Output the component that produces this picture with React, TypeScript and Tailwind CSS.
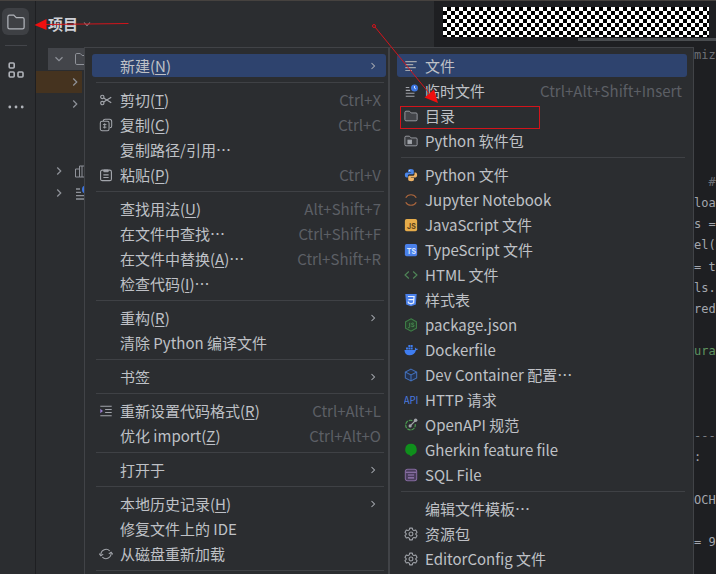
import React from "react";

type IconProps = { className?: string };

const Svg = ({ className = "w-[14px] h-[14px]", children }: { className?: string; children: React.ReactNode }) => (
  <svg className={`${className} flex-shrink-0`} viewBox="0 0 16 16" fill="none" stroke="currentColor" aria-hidden="true">
    {children}
  </svg>
);

const FolderIcon = ({ className }: IconProps) => (
  <Svg className={className}>
    <path d="M1.5 3.8c0-.8.5-1.3 1.3-1.3h3.4l2 2h5c.8 0 1.3.5 1.3 1.3v6.4c0 .8-.5 1.3-1.3 1.3H2.8c-.8 0-1.3-.5-1.3-1.3z" />
  </Svg>
);

const DirectoryIcon = () => (
  <Svg>
    <path
      d="M1 3.8c0-.8.5-1.3 1.3-1.3h3.9l2 2h5.5c.8 0 1.3.5 1.3 1.3v6.4c0 .8-.5 1.3-1.3 1.3H2.3c-.8 0-1.3-.5-1.3-1.3z"
      fill="#43454a"
    />
  </Svg>
);

const PackageIcon = () => (
  <Svg>
    <path d="M1 3.8c0-.8.5-1.3 1.3-1.3h3.9l2 2h5.5c.8 0 1.3.5 1.3 1.3v6.4c0 .8-.5 1.3-1.3 1.3H2.3c-.8 0-1.3-.5-1.3-1.3z" fill="#3a3c40" />
    <rect x="4.5" y="7" width="4" height="4" fill="currentColor" />
  </Svg>
);

const ChevronRight = ({ className = "w-3 h-3" }: IconProps) => (
  <Svg className={className}>
    <path d="M6 4 10 8 6 12" strokeWidth="1.4" />
  </Svg>
);

const ChevronDown = ({ className = "w-3 h-3" }: IconProps) => (
  <Svg className={className}>
    <path d="M4 6 8 10 12 6" strokeWidth="1.4" />
  </Svg>
);

const StructureIcon = () => (
  <Svg className="w-4 h-4">
    <g strokeWidth="1.6">
      <rect x="1.2" y="1" width="5" height="5" rx="1" />
      <rect x="1.2" y="10" width="5" height="5" rx="1" />
      <rect x="10" y="10" width="5" height="5" rx="1" />
    </g>
  </Svg>
);

const MoreIcon = () => (
  <Svg className="w-4 h-4">
    <g fill="currentColor" stroke="none">
      <circle cx="1.8" cy="8" r="1.4" />
      <circle cx="8" cy="8" r="1.4" />
      <circle cx="14.2" cy="8" r="1.4" />
    </g>
  </Svg>
);

const LibraryIcon = () => (
  <Svg className="w-4 h-4">
    <path d="M1.5 6h4v8h-4zM5.5 3h5v11h-5zM10.5 6h4v8h-4zM8 3v11" />
  </Svg>
);

const ScratchIcon = ({ className }: IconProps) => (
  <Svg className={className}>
    <path d="M2 4h4M2 7.3h5M2 10.6h10M2 14h10" strokeWidth="1.3" />
    <circle cx="12" cy="4.5" r="4" fill="#3d75e0" stroke="none" />
    <path d="M12 2.3v2.4l1.5.8" stroke="#fff" strokeWidth=".9" />
  </Svg>
);

const CutIcon = () => (
  <Svg>
    <circle cx="3.8" cy="4.5" r="1.9" strokeWidth="1.3" />
    <circle cx="3.8" cy="11.5" r="1.9" strokeWidth="1.3" />
    <path d="M5.3 5.6 14 11.2M5.3 10.4 14 4.800" strokeWidth="1.3" />
  </Svg>
);

const CopyIcon = () => (
  <Svg>
    <path d="M5 3.5C5 2 5.8 1.5 7 1.5h5c1.7 0 2.5.8 2.5 2.5v5c0 1.3-.7 2-2 2" strokeWidth="1.2" />
    <rect x="1.5" y="3.8" width="10" height="10.7" rx="2" strokeWidth="1.2" />
    <path d="M4.5 7.5h4M4.5 10.5h4M6.5 6v6" strokeWidth="1.1" />
  </Svg>
);

const PasteIcon = () => (
  <Svg>
    <rect x="1.8" y="2.5" width="12.4" height="12" rx="2" strokeWidth="1.3" />
    <path d="M5.5 2.3h5v2h-5z" fill="currentColor" />
    <path d="M5 7.8h6M5 10.8h6" strokeWidth="1.3" />
  </Svg>
);

const ReformatIcon = () => (
  <Svg>
    <path d="M1.5 2.5h13M7 6.2h7.5M7 9.8h7.5M1.5 13.5h13" strokeWidth="1.2" />
    <path d="m1.5 5.5 3 2.5-3 2.5z" fill="#9a7fd0" stroke="none" />
  </Svg>
);

const ReloadIcon = () => (
  <Svg>
    <path d="M2.2 9.5a6 6 0 0 1 10-5.2M13.8 6.5a6 6 0 0 1-10 5.2" strokeWidth="1.2" />
    <path d="M.2 7.5 2.2 10l2.6-1.8M15.8 8.5l-2-2.5-2.6 1.8" strokeWidth="1.2" />
  </Svg>
);

const FileIcon = () => (
  <Svg>
    <path d="M1.5 3h13M1.5 6.4h9M1.5 9.8h12M1.5 13.2h7.5" strokeWidth="1.3" />
  </Svg>
);

const PythonIcon = () => (
  <Svg>
    <path d="M7.6 1C5.5 1 4.6 1.8 4.6 3v1.6h3.6v.6H3C1.7 5.2 1 6.3 1 8s.7 2.9 2 2.9h1.4V9c0-1 .8-1.8 1.8-1.8h3.4c.9 0 1.6-.7 1.6-1.6V3c0-1.2-1.2-2-3.6-2z" fill="#4b86ea" stroke="none" />
    <path d="M8.4 15c2.1 0 3-.8 3-2v-1.6H7.8v-.6H13c1.3 0 2-1.1 2-2.8s-.7-2.9-2-2.9h-1V7c0 1-.8 1.8-1.8 1.8H6.4c-.9 0-1.6.7-1.6 1.6V13c0 1.2 1.2 2 3.6 2z" fill="#edb368" stroke="none" />
    <circle cx="6.4" cy="2.9" r=".7" fill="#fff" stroke="none" />
  </Svg>
);

const JupyterIcon = () => (
  <Svg>
    <path d="M2 5.5C3.2 3.1 5.4 2 8 2s4.8 1.1 6 3.5M2 10.5C3.2 12.9 5.4 14 8 14s4.8-1.1 6-3.5" stroke="#a8643c" strokeWidth="1.4" />
  </Svg>
);

const LetterBox = ({ fill, color, text }: { fill: string; color: string; text: string }) => (
  <Svg>
    <rect x="1" y="1" width="14" height="14" rx="2" fill={fill} stroke="none" />
    <text x="8.5" y="12.5" fontSize="8" fontWeight="700" fontFamily="Inter, sans-serif" textAnchor="middle" fill={color} stroke="none">
      {text}
    </text>
  </Svg>
);

const JsIcon = () => <LetterBox fill="#e6ac4a" color="#5c421a" text="JS" />;
const TsIcon = () => <LetterBox fill="#4a80ea" color="#dbe6ff" text="TS" />;

const HtmlIcon = () => (
  <Svg>
    <path d="M5.5 4 1.2 8l4.3 4M10.5 4l4.300 4-4.300 4" stroke="#4f8657" strokeWidth="1.3" />
  </Svg>
);

const CssIcon = () => (
  <Svg>
    <path d="M1.5 1h13l-1 12L8 15l-5.500-2z" fill="#4a80ea" stroke="none" />
    <path d="M4.5 4h7l-.5 7.300-3 1-3-1-.1-1.500M5 7.600h6" stroke="#e8effd" strokeWidth="1.4" />
  </Svg>
);

const NodeIcon = () => (
  <Svg>
    <path d="M8 .9 14.2 4.4v7.200L8 15.100l-6.200-3.500V4.400z" stroke="#3f8148" strokeWidth="1.2" fill="#29402e" />
    <path d="M6.5 5.500v4.300c0 1-.6 1.400-1.800 1.200M11.300 6.300c-1-.8-2.800-.6-2.800.4 0 1.400 3 .7 3 2.200 0 1.200-2.200 1.300-3.200.4" stroke="#4c9556" />
  </Svg>
);

const DockerIcon = () => (
  <Svg>
    <path d="M.5 8h11.700c.6-.7.5-1.800 0-2.600.8-.2 1.600.4 1.900 1.300.7-.2 1.400-.1 1.900.2-.4.900-1.200 1.300-2.300 1.300C12.700 12 10 14 6.500 14 2.800 14 .7 12 .5 8z" fill="#3f7df0" stroke="none" />
    <path d="M2.300 5h2.200v2.300H2.300zM5 5h2.200v2.300H5zM7.700 5h2.200v2.300H7.700zM5 2.300h2.200v2.200H5zM7.700 2.300h2.200v2.200H7.700z" fill="#3f7df0" stroke="none" />
  </Svg>
);

const ContainerIcon = () => (
  <Svg>
    <path d="M8 1.300 14.500 4.600v6.800L8 14.700l-6.500-3.300V4.600zM1.500 4.600 8 8l6.500-3.400M8 8v6.700" stroke="#426fb9" strokeWidth="1.2" fill="#25324d" />
  </Svg>
);

const ApiIcon = () => (
  <Svg>
    <text x="8" y="12.5" fontSize="11" fontFamily="'Noto Sans CJK SC', sans-serif" fontWeight="400" textAnchor="middle" fill="#4a7be0" stroke="none">
      API
    </text>
  </Svg>
);

const OpenApiIcon = () => (
  <Svg>
    <path d="M9.500 3A5.500 5.500 0 1 0 12.800 7" stroke="#4b9a50" strokeWidth="1.4" strokeDasharray="4 1" />
    <path d="m7.300 8.700 5.400-5.400" strokeWidth="1.5" />
    <circle cx="7" cy="9" r="1.8" fill="currentColor" stroke="none" />
    <circle cx="13.300" cy="2.700" r="2" fill="currentColor" stroke="none" />
  </Svg>
);

const GherkinIcon = () => (
  <Svg>
    <path d="M8 1a6.500 6.500 0 0 1 2 12.700L8 15.500 6.300 13.800A6.500 6.500 0 0 1 8 1z" fill="#0f8f1c" stroke="none" />
  </Svg>
);

const SqlIcon = () => (
  <Svg>
    <rect x="1.5" y="1.5" width="13" height="13" rx="2.5" fill="#4a3d5c" stroke="#84699f" strokeWidth="1.2" />
    <path d="M2 4.800h12M4.500 8h7M4.500 11.300h7" stroke="#9a7fb8" strokeWidth="1.2" />
  </Svg>
);

const GearIcon = () => (
  <Svg>
    <path
      d="M6.500 1.300h3l.5 2 1.400.8 2-.6 1.500 2.600L13.500 7.500v1l1.400 1.400-1.500 2.600-2-.6-1.400.8-.5 2h-3l-.5-2-1.400-.8-2 .6-1.500-2.600L2.500 8.500v-1L1.100 6.100l1.500-2.600 2 .6L6 3.300z"
      strokeWidth="1.2"
      strokeLinejoin="round"
    />
    <circle cx="8" cy="8" r="2.2" strokeWidth="1.2" />
  </Svg>
);

type Item = {
  label: string;
  mnemonic?: string;
  suffix?: string;
  icon?: React.ElementType;
  shortcut?: string;
  submenu?: boolean;
  active?: boolean;
};

const contextMenu: Item[][] = [
  [{ label: "新建", mnemonic: "N", submenu: true, active: true }],
  [
    { label: "剪切", mnemonic: "T", icon: CutIcon, shortcut: "Ctrl+X" },
    { label: "复制", mnemonic: "C", icon: CopyIcon, shortcut: "Ctrl+C" },
    { label: "复制路径/引用…" },
    { label: "粘贴", mnemonic: "P", icon: PasteIcon, shortcut: "Ctrl+V" },
  ],
  [
    { label: "查找用法", mnemonic: "U", shortcut: "Alt+Shift+7" },
    { label: "在文件中查找…", shortcut: "Ctrl+Shift+F" },
    { label: "在文件中替换", mnemonic: "A", suffix: "…", shortcut: "Ctrl+Shift+R" },
    { label: "检查代码", mnemonic: "I", suffix: "…" },
  ],
  [{ label: "重构", mnemonic: "R", submenu: true }, { label: "清除 Python 编译文件" }],
  [{ label: "书签", submenu: true }],
  [
    { label: "重新设置代码格式", mnemonic: "R", icon: ReformatIcon, shortcut: "Ctrl+Alt+L" },
    { label: "优化 import", mnemonic: "Z", shortcut: "Ctrl+Alt+O" },
  ],
  [{ label: "打开于", submenu: true }],
  [
    { label: "本地历史记录", mnemonic: "H", submenu: true },
    { label: "修复文件上的 IDE" },
    { label: "从磁盘重新加载", icon: ReloadIcon },
  ],
  [],
];

const newMenu: Item[][] = [
  [
    { label: "文件", icon: FileIcon, active: true },
    { label: "临时文件", icon: ScratchIcon, shortcut: "Ctrl+Alt+Shift+Insert" },
    { label: "目录", icon: DirectoryIcon },
    { label: "Python 软件包", icon: PackageIcon },
  ],
  [
    { label: "Python 文件", icon: PythonIcon },
    { label: "Jupyter Notebook", icon: JupyterIcon },
    { label: "JavaScript 文件", icon: JsIcon },
    { label: "TypeScript 文件", icon: TsIcon },
    { label: "HTML 文件", icon: HtmlIcon },
    { label: "样式表", icon: CssIcon },
    { label: "package.json", icon: NodeIcon },
    { label: "Dockerfile", icon: DockerIcon },
    { label: "Dev Container 配置…", icon: ContainerIcon },
    { label: "HTTP 请求", icon: ApiIcon },
    { label: "OpenAPI 规范", icon: OpenApiIcon },
    { label: "Gherkin feature file", icon: GherkinIcon },
    { label: "SQL File", icon: SqlIcon },
  ],
  [
    { label: "编辑文件模板…" },
    { label: "资源包", icon: GearIcon },
    { label: "EditorConfig 文件", icon: GearIcon },
  ],
];

const MenuRow = ({ label, mnemonic, suffix, icon: Icon, shortcut, submenu, active }: Item) => (
  <li className="h-[25px] py-px" role="none">
    <button
      type="button"
      role="menuitem"
      className={`flex h-full w-full items-center gap-[7px] rounded-[3px] pl-[7px] pr-[5px] text-left ${active ? "bg-[#2e436e]" : ""}`}
    >
      <span className="flex w-[14px] flex-shrink-0 text-[#a2a5ab]">{Icon && <Icon />}</span>
      <span className="flex-1 whitespace-nowrap">
        {label}
        {mnemonic && (
          <>
            (<u className="underline-offset-2">{mnemonic}</u>)
          </>
        )}
        {suffix}
      </span>
      {shortcut && <span className="whitespace-nowrap text-[#5c5f65]">{shortcut}</span>}
      {submenu && <ChevronRight className="mr-[2px] w-3 h-3 text-[#a9acb2]" />}
    </button>
  </li>
);

const Menu = ({ name, groups, className }: { name: string; groups: Item[][]; className: string }) => (
  <div
    role="menu"
    aria-label={name}
    className={`w-[305px] border border-b-0 border-[#414347] bg-[#2b2d30] pl-[7px] pt-[5px] ${className}`}
  >
    {groups.map((items, i) => (
      <React.Fragment key={i}>
        {i > 0 && (
          <div className="flex h-[9px] items-center pl-1 pr-[2px]">
            <hr className="w-full border-[#3f4145]" />
          </div>
        )}
        <ul role="none">
          {items.map((item) => (
            <MenuRow key={item.label} {...item} />
          ))}
        </ul>
      </React.Fragment>
    ))}
  </div>
);

const code = [
  "miz", "", "", "", "", "", "  #", "loa", "s =", "el(", "= t", "ls.", "red",
  "", "ura", "", "", "", "---", ":", "", "OCH", "", "= 9", "",
];

const codeColor: Record<string, string> = {
  miz: "text-[#6d7076]",
  "  #": "text-[#6d7076]",
  ura: "text-[#5f9460]",
  "---": "text-[#7a7d83]",
};

const ToolBar = () => (
  <nav className="flex w-9 flex-shrink-0 flex-col items-center border-r border-[#1e1f22] pr-1 pt-[7px] text-[#b0b3b9]">
    <button type="button" aria-label="项目" className="flex h-[27px] w-[27px] items-center justify-center rounded-md bg-[#3e4044]">
      <FolderIcon className="w-5 h-5" />
    </button>
    <hr className="mt-[10px] w-[22px] border-[#43454a]" />
    <button type="button" aria-label="结构" className="mt-4 p-0">
      <StructureIcon />
    </button>
    <button type="button" aria-label="更多" className="mt-[21px] p-0">
      <MoreIcon />
    </button>
  </nav>
);

const ProjectPanel = () => (
  <section className="w-[398px] flex-shrink-0 text-[#8f9299]">
    <header className="flex h-[47px] items-center gap-[3px] pb-px pl-3">
      <h1 className="font-bold text-[#ced0d6]">项目</h1>
      <ChevronDown />
    </header>
    <div className="ml-3 flex h-[22px] items-center gap-2 bg-[#43454a] pl-1">
      <ChevronDown className="w-[14px] h-[14px]" />
      <FolderIcon className="w-4 h-4" />
    </div>
    <div className="mt-px flex h-[22px] w-[46px] items-center bg-[#45331f] pl-8">
      <ChevronRight className="w-[14px] h-[14px]" />
    </div>
    <div className="flex h-[22px] items-center pl-8">
      <ChevronRight className="w-[14px] h-[14px]" />
    </div>
    <div className="mt-[45px] flex h-[22px] items-center gap-2 pl-4">
      <ChevronRight className="w-[14px] h-[14px]" />
      <LibraryIcon />
    </div>
    <div className="flex h-[22px] items-center gap-2 pl-4">
      <ChevronRight className="w-[14px] h-[14px]" />
      <ScratchIcon className="w-4 h-4" />
    </div>
  </section>
);

const Editor = () => (
  <main className="flex min-w-0 flex-1 flex-col overflow-hidden bg-[#1e1f22]">
    <div className="pl-[9px] pr-[7px] pt-[6px]">
      <div className="h-[30px] bg-white bg-[conic-gradient(#000_25%,#fff_0_50%,#000_0_75%,#fff_0)] bg-[length:8px_8px]" />
    </div>
    <div className="ml-36 mt-px h-[3px] bg-[#4a4d50]" />
    <pre className="mt-[3px] grid flex-1 auto-rows-fr items-center pl-[260px] font-['DejaVu_Sans_Mono',monospace] text-xs text-[#a3a6ad]">
      {code.map((line, i) => (
        <span key={i} className={codeColor[line]}>
          {line}
        </span>
      ))}
    </pre>
  </main>
);

const Annotations = () => (
  <svg className="pointer-events-none absolute -top-px left-0" width="600" height="200" fill="none" stroke="#d3141b" aria-hidden="true">
    <path d="M128.500 23.500 45 24.500" />
    <path d="M34.500 25 46.500 19v11z" fill="#f00f0f" stroke="none" />
    <path d="M375 27 429 93" />
    <circle cx="374" cy="26" r="1.5" />
    <path d="m438 103-13.500-5.500 9.500-8z" fill="#f00f0f" stroke="none" />
    <rect x="400.500" y="106.500" width="139" height="22" />
  </svg>
);

export default function App() {
  return (
    <div
      lang="zh-CN"
      className="relative flex h-screen overflow-hidden border-t border-[#46423f] bg-[#2b2d30] font-['Noto_Sans_CJK_SC',sans-serif] text-[15px] leading-[22px] text-[#bfc1c6]"
    >
      <ToolBar />
      <ProjectPanel />
      <Editor />
      <div className="absolute bottom-0 left-[84px] top-[46px] flex">
        <Menu name="项目" groups={contextMenu} className="pr-[2px]" />
        <Menu name="新建" groups={newMenu} className="pr-[6px]" />
      </div>
      <Annotations />
    </div>
  );
}
